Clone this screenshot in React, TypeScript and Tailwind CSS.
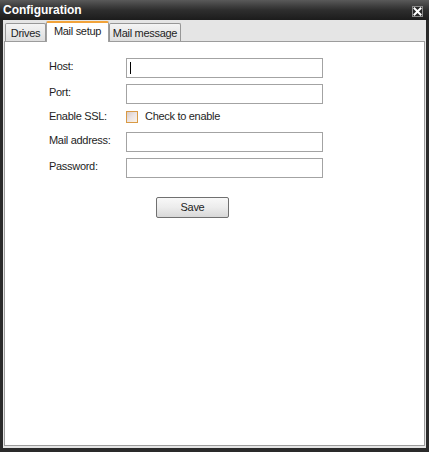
import React from 'react';

const font = { fontFamily: '"Liberation Sans", Arial, sans-serif' };

const Field = ({ label, caret }: { label: string; caret?: boolean }) => (
  <div className="flex h-[20px] items-start">
    <span className="w-[77px] pt-[2px] text-[11px] leading-[13px] tracking-[-0.3px] text-[#1e1e1e]">{label}</span>
    <div className="relative h-[20px] w-[197px] border border-[#a3a3a3] bg-white">
      {caret && <span className="absolute left-[3px] top-[3px] h-[12px] w-px bg-black" />}
    </div>
  </div>
);

const CloseButton = () => (
  <div className="flex h-[11px] w-[11px] items-center justify-center border border-[#8c8c8c] bg-[#262626]">
    <svg width="9" height="9" viewBox="0 0 9 9">
      <path d="M1.5 1.5 L7.5 7.5 M7.5 1.5 L1.5 7.5" stroke="#ffffff" strokeWidth="2" strokeLinecap="square" />
    </svg>
  </div>
);

export default function App() {
  const tabs = ['Drives', 'Mail setup', 'Mail message'];

  return (
    <div style={font} className="flex h-[452px] w-[429px] flex-col bg-[#2a2a2a] px-[3px] pb-[4px]">
      {/* Title bar */}
      <div className="-mx-[3px] flex h-[20px] items-center justify-between bg-gradient-to-b from-[#5a5a5a] via-[#2e2e2e] to-[#1c1c1c] pl-[3px] pr-[6px]">
        <span className="text-[12px] font-bold leading-none text-white">Configuration</span>
        <div className="mt-[2px]">
          <CloseButton />
        </div>
      </div>

      <div className="flex flex-1 flex-col bg-[#e5e5e5] px-px pb-[2px]">
        {/* Tabs */}
        <div className="flex h-[21px] items-end pl-[1px]">
          {tabs.map((tab) =>
            tab === 'Mail setup' ? (
              <div
                key={tab}
                className="relative z-10 -mb-px flex h-[21px] w-[63px] items-center justify-center rounded-t-[2px] border-x border-t-2 border-x-[#a0a0a0] border-t-[#f2a33a] bg-white pb-[2px] text-[11px] tracking-[-0.3px] text-[#1e1e1e]"
              >
                {tab}
              </div>
            ) : (
              <div
                key={tab}
                className={`flex h-[18px] items-center justify-center rounded-t-[2px] border border-b-0 border-[#979797] bg-gradient-to-b from-[#f4f4f4] to-[#dedede] pt-[1px] text-[11px] tracking-[-0.3px] text-[#1e1e1e] ${
                  tab === 'Drives' ? 'w-[41px]' : 'w-[72px]'
                }`}
              >
                {tab}
              </div>
            )
          )}
        </div>

        {/* Panel */}
        <div className="flex flex-1 flex-col border border-[#9c9c9c] bg-white pl-[44px] pt-[16px]">
          <div className="flex flex-col gap-[6px]">
            <Field label="Host:" caret />
            <Field label="Port:" />
            <div className="flex h-[16px] items-start">
              <span className="w-[77px] text-[11px] leading-[13px] tracking-[-0.3px] text-[#1e1e1e]">Enable SSL:</span>
              <div className="mt-[1px] h-[12px] w-[12px] border border-[#d99a45] bg-gradient-to-br from-[#d8ccc8] via-[#ece4e4] to-[#fbf3e6]" />
              <span className="ml-[7px] text-[11px] leading-[13px] tracking-[-0.3px] text-[#1e1e1e]">Check to enable</span>
            </div>
            <Field label="Mail address:" />
            <Field label="Password:" />
          </div>

          <div className="mt-[16px] pl-[107px]">
            <button className="h-[21px] w-[73px] rounded-[2px] border border-[#707070] bg-gradient-to-b from-[#f8f8f8] via-[#ececec] to-[#d8d8d8] text-[11px] tracking-[-0.3px] text-[#1e1e1e]">
              Save
            </button>
          </div>
        </div>
      </div>
    </div>
  );
}
